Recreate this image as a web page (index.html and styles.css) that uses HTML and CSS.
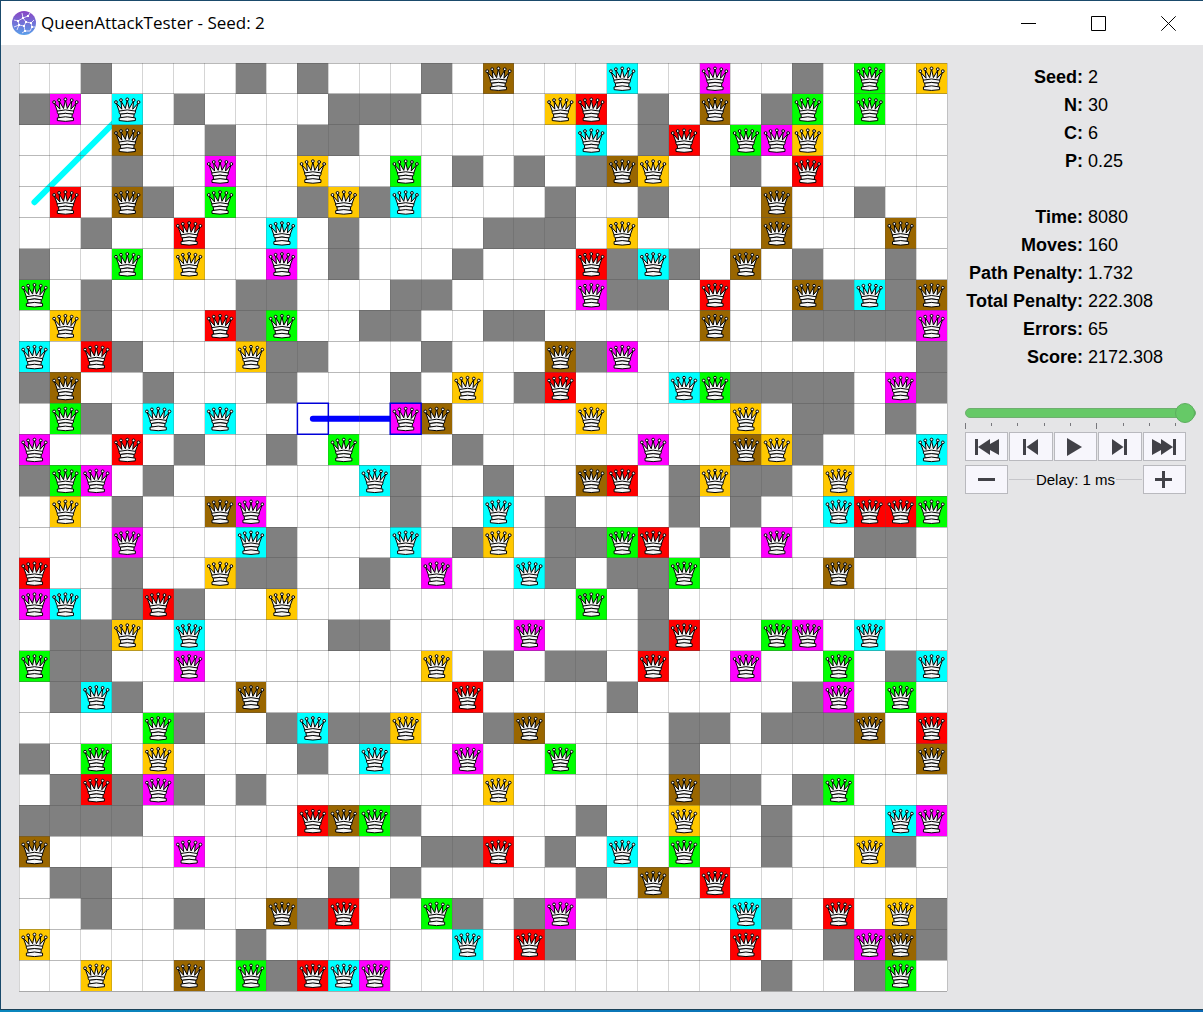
FILE: index.html
```
<!DOCTYPE html>
<html lang="en">
<head>
<meta charset="utf-8">
<title>QueenAttackTester - Seed: 2</title>
<link rel="stylesheet" href="styles.css">
</head>
<body>
<div class="window">
  <header class="titlebar">
    <svg class="app-icon" viewBox="0 0 24 24" aria-hidden="true">
      <defs>
        <linearGradient id="iconFill" x1="0" y1="0" x2="0" y2="1">
          <stop offset="0" stop-color="#8a45c4"/>
          <stop offset="1" stop-color="#5aa0ea"/>
        </linearGradient>
      </defs>
      <circle cx="12" cy="12" r="12" fill="url(#iconFill)"/>
      <path class="icon-lines" d="M10 2l1 5-5 3-4-1M11 7l5-2 2-3M6 10l1 4-5 2M7 14l5 1 2-4-3-4M14 11l5 1 3-3M19 12l1 4 3 0M12 15l1 5-3 2M7 14l-2 5M13 20l5 0 2-4"/>
      <path class="icon-dots" d="M10 6h2v2h-2zM5 9h2v2h-2zM13 10h2v2h-2zM18 11h2v2h-2zM6 13h2v2h-2zM11 14h2v2h-2zM19 15h2v2h-2zM12 19h2v2h-2zM15 4h2v2h-2z"/>
    </svg>
    <h1 class="title">QueenAttackTester - Seed: 2</h1>
    <div class="caption-buttons">
      <button class="caption" type="button" aria-label="Minimize"><svg viewBox="0 0 15 15"><path d="M0 7.5h15"/></svg></button>
      <button class="caption" type="button" aria-label="Maximize"><svg viewBox="0 0 15 15"><path d="M.5.5h14v14H.5z"/></svg></button>
      <button class="caption" type="button" aria-label="Close"><svg viewBox="0 0 15 15"><path d="M.3.3l14.4 14.4M14.7.3L.3 14.7"/></svg></button>
    </div>
  </header>

  <main class="content">
    <svg class="board" id="board" viewBox="0 0 930 930" role="img" aria-label="Board">
      <defs>
        <g id="queen">
          <path d="M7.5 17.5L4.4 9l5.6 6.3L9.2 7l4.4 7.6 1.9-8.6 1.9 8.6L21.8 7 21 15.300l5.600-6.300-3.100 8.500z"/>
          <path d="M7.300 17.200Q15.500 14.800 23.700 17.200Q24 18.800 22.600 20.300Q15.500 18.600 8.400 20.300Q7 18.800 7.300 17.200z"/>
          <path d="M8.600 20.300Q15.500 18.600 22.400 20.300L22 23.600H9z"/>
          <path d="M7.400 24Q15.500 21.800 23.600 24V26.700Q15.500 28.300 7.400 26.700z"/>
          <circle cx="4.200" cy="8.200" r="1.400"/>
          <circle cx="9.200" cy="6.200" r="1.400"/>
          <circle cx="15.500" cy="5.400" r="1.400"/>
          <circle cx="21.800" cy="6.200" r="1.400"/>
          <circle cx="26.800" cy="8.200" r="1.400"/>
        </g>
      </defs>
      <g id="walls"></g>
      <path class="move move-last" d="M15.500 139.500L108.500 46.500"/>
      <path class="move move-now" d="M294.500 356.500H387.500"/>
      <g id="queens"></g>
      <path id="rows" class="grid-rows"/>
      <path id="columns" class="grid-columns"/>
      <path class="outline" stroke-width="1.5" d="M279 341h31v31h-31zM372 341h31v31h-31z"/>
    </svg>

    <aside class="side">
      <dl class="facts">
        <dt>Seed:</dt><dd>2</dd>
        <dt>N:</dt><dd>30</dd>
        <dt>C:</dt><dd>6</dd>
        <dt>P:</dt><dd>0.25</dd>
      </dl>
      <dl class="facts">
        <dt>Time:</dt><dd>8080</dd>
        <dt>Moves:</dt><dd>160</dd>
        <dt>Path Penalty:</dt><dd>1.732</dd>
        <dt>Total Penalty:</dt><dd>222.308</dd>
        <dt>Errors:</dt><dd>65</dd>
        <dt>Score:</dt><dd>2172.308</dd>
      </dl>

      <div class="player">
        <input class="slider" type="range" min="0" max="160" value="160" aria-label="Move">
        <svg class="ticks" viewBox="0 0 221 6" aria-hidden="true">
          <path d="M.5 0v6M26.500 0v3M52.500 0v3M79.500 0v3M105.500 0v3M131.500 0v6M158.500 0v3M184.500 0v3M210.500 0v3"/>
        </svg>
        <div class="buttons">
          <button class="tool" type="button" aria-label="First"><svg viewBox="0 0 26 18"><path d="M1 1h3v16H1zM4 9L16 1v5l9-5v16l-9-5v5z"/></svg></button>
          <button class="tool" type="button" aria-label="Previous"><svg viewBox="0 0 26 18"><path d="M5 1h3v16H5zM8.500 9L20 1v16z"/></svg></button>
          <button class="tool" type="button" aria-label="Play"><svg viewBox="0 0 26 18"><path d="M5 0v18l15-9z"/></svg></button>
          <button class="tool" type="button" aria-label="Next"><svg viewBox="0 0 26 18"><path d="M17 1h3v16h-3zM16.500 9L5 1v16z"/></svg></button>
          <button class="tool" type="button" aria-label="Last"><svg viewBox="0 0 26 18"><path d="M22 1h3v16h-3zM22 9L10 1v5L1 1v16l9-5v5z"/></svg></button>
          <button class="tool" type="button" aria-label="Shorter delay"><svg viewBox="0 0 26 18"><path d="M4 7h17v3H4z"/></svg></button>
          <div class="delay"><span>Delay: 1 ms</span></div>
          <button class="tool" type="button" aria-label="Longer delay"><svg viewBox="0 0 26 18"><path d="M4 7h7V0h3v7h7v3h-7v7h-3v-7H4z"/></svg></button>
        </div>
      </div>
    </aside>
  </main>
</div>
<script src="board.js"></script>
</body>
</html>
```
FILE: styles.css
```
* {
  box-sizing: border-box;
}

body {
  margin: 0;
  min-height: 100vh;
  background: linear-gradient(90deg, #0a87bd, #0b68b3);
  font-family: "Liberation Sans", Arial, sans-serif;
  color: #000;
}

.window {
  background: #e5e5e7;
  border-top: 1px solid #1a4a6b;
  border-left: 1px solid #1a4a6b;
  border-bottom: 1px solid #1c4258;
}

.titlebar {
  display: flex;
  align-items: center;
  height: 44px;
  padding-left: 11px;
  background: #fff;
}

.app-icon {
  width: 24px;
  height: 24px;
  margin-right: 5px;
}

.icon-lines {
  fill: none;
  stroke: #e4dcfa;
  stroke-width: 1;
}

.icon-dots {
  fill: #fff;
}

.title {
  flex: 1;
  margin: 0;
  font: 400 17px/24px "Open Sans", "Noto Sans", sans-serif;
}

.caption-buttons {
  display: flex;
}

.caption {
  display: grid;
  place-items: center;
  width: 70px;
  height: 44px;
  padding: 0;
  border: 0;
  background: none;
}

.caption svg {
  width: 15px;
  height: 15px;
  fill: none;
  stroke: #000;
  stroke-width: 1;
}

.content {
  display: flex;
  align-items: flex-start;
  gap: 18px;
  padding: 18px 0 18px 18px;
}

.board {
  flex: 1;
  min-width: 0;
  aspect-ratio: 1;
  background: #fff;
  overflow: visible;
}

.wall { fill: #808080; }
.red { fill: #f00; }
.yellow { fill: #ffc800; }
.brown { fill: #960; }
.green { fill: #0f0; }
.cyan { fill: #0ff; }
.magenta { fill: #f0f; }

.board rect {
  shape-rendering: crispEdges;
}

.piece {
  fill: #f6f6f6;
  stroke: #000;
  stroke-width: 1;
  stroke-linejoin: round;
}

.move {
  fill: none;
  stroke-width: 6;
  stroke-linecap: round;
}

.move-last { stroke: #0ff; }
.move-now { stroke: #00f; }

.grid-rows,
.grid-columns {
  fill: none;
  stroke: #505050;
  stroke-width: 1;
  shape-rendering: crispEdges;
}

.grid-rows { stroke-opacity: .4; }
.grid-columns { stroke-opacity: .24; }

.outline {
  fill: none;
  stroke: #0000d8;
}

.side {
  flex: none;
  width: 238px;
}

.facts {
  display: grid;
  grid-template-columns: 118px 1fr;
  column-gap: 5px;
  margin: 0 0 28px;
  font-size: 18px;
  line-height: 28px;
}

.facts dt {
  font-weight: 700;
  text-align: right;
  white-space: nowrap;
}

.facts dd {
  margin: 0;
}

.player {
  margin-top: 32px;
}

.slider {
  display: block;
  width: 231px;
  height: 20px;
  margin: 0;
  appearance: none;
  background: none;
}

.slider::-webkit-slider-runnable-track {
  height: 10px;
  border: 1px solid #6fae70;
  border-radius: 5px;
  background: #66c967;
}

.slider::-webkit-slider-thumb {
  appearance: none;
  width: 20px;
  height: 20px;
  margin-top: -6px;
  border: 1px solid #5cae5e;
  border-radius: 50%;
  background: #66c967;
}

.ticks {
  display: block;
  width: 221px;
  height: 6px;
  margin-bottom: 3px;
  fill: none;
  stroke: #77777c;
}

.buttons {
  display: grid;
  grid-template-columns: repeat(5, 1fr);
  gap: 4px 1px;
  width: 221px;
}

.tool {
  display: grid;
  place-items: center;
  height: 29px;
  padding: 0;
  border: 1px solid #b9b9be;
  background: #f7f6fc;
}

.tool svg {
  width: 26px;
  height: 18px;
  fill: #414147;
}

.delay {
  grid-column: span 3;
  display: flex;
  align-items: center;
  gap: 1px;
  font-size: 15px;
  line-height: 20px;
  white-space: nowrap;
}

.delay::before,
.delay::after {
  content: "";
  flex: 1;
  height: 1px;
  background: #c6c6ca;
}
```
FILE: board.js
```
// One character per cell: "." free, "#" wall, letters are queens by colour.
const layout = [
  "..#....#.#...#.b...c..m..#.g.y",
  "#m.c.#....###....yr.#.b.#g.g..",
  "...b..#..##.......c.#r.gmy....",
  "...#..m..y..g.#.#.#by..#.r....",
  ".r.b#.g..#y#c....#..#...b..#..",
  "..#..r..c.#....###.y....b...b.",
  "#..g.y..m.#...#...r#c#.b.#..#.",
  "g.#....##...##....m##.r..b#c#b",
  ".y#...r#g..##..##.....b..####m",
  "c.r#...y##...#...b#m.........#",
  "#b..#...#...#.y.#r...cg####.m#",
  ".g#.c.c.....mb....y....y.##.#.",
  "m..r.#..#.g...#.....m..by#...c",
  "#gm.#......c#..#..br.#y##.y...",
  ".y.#..bm....#..c.#...#.#..crrg",
  "...m...c#...c.#y.##gr.#.m..##.",
  "r..#..y##..#.m..c#.##g....b...",
  "mc.#r#..y.........g.#.........",
  ".##y.c....##....m...#r..gm.c..",
  "g##..m.......y.#.##.r..m..g.#c",
  ".#c#...b......r....#.....#m.g.",
  "....g#..#c##y..#b....##.###b.r",
  "#.g.y....#.c..m..g...#.......b",
  ".#r#m#.#.......y.....b##.#g...",
  "####.....rbg#.....#..y..#...cm",
  "b....m.......##r.#.c.g..#..y#.",
  ".##.......#.#.....#.b.r.......",
  "..#..#..b#r..g#.#m.....c#.r.y#",
  "y......#......c.r#.....r..#mb#",
  "..y..b.g#rcm............#..#g."
];

const colours = { r: "red", y: "yellow", b: "brown", g: "green", c: "cyan", m: "magenta" };
const size = 31;
let walls = "";
let queens = "";

layout.forEach((line, row) => {
  [...line].forEach((cell, column) => {
    if (cell === ".") return;
    const x = column * size;
    const y = row * size;
    const square = name => `<rect class="${name}" x="${x}" y="${y}" width="${size}" height="${size}"/>`;
    if (cell === "#") {
      walls += square("wall");
    } else {
      queens += square(colours[cell]) + `<use class="piece" href="#queen" x="${x}" y="${y}"/>`;
    }
  });
});

document.getElementById("walls").innerHTML = walls;
document.getElementById("queens").innerHTML = queens;

let rows = "";
let columns = "";
for (let i = 0; i <= layout.length; i++) {
  rows += `M0 ${i * size}H930`;
  columns += `M${i * size} 0V930`;
}
document.getElementById("rows").setAttribute("d", rows);
document.getElementById("columns").setAttribute("d", columns);
```
